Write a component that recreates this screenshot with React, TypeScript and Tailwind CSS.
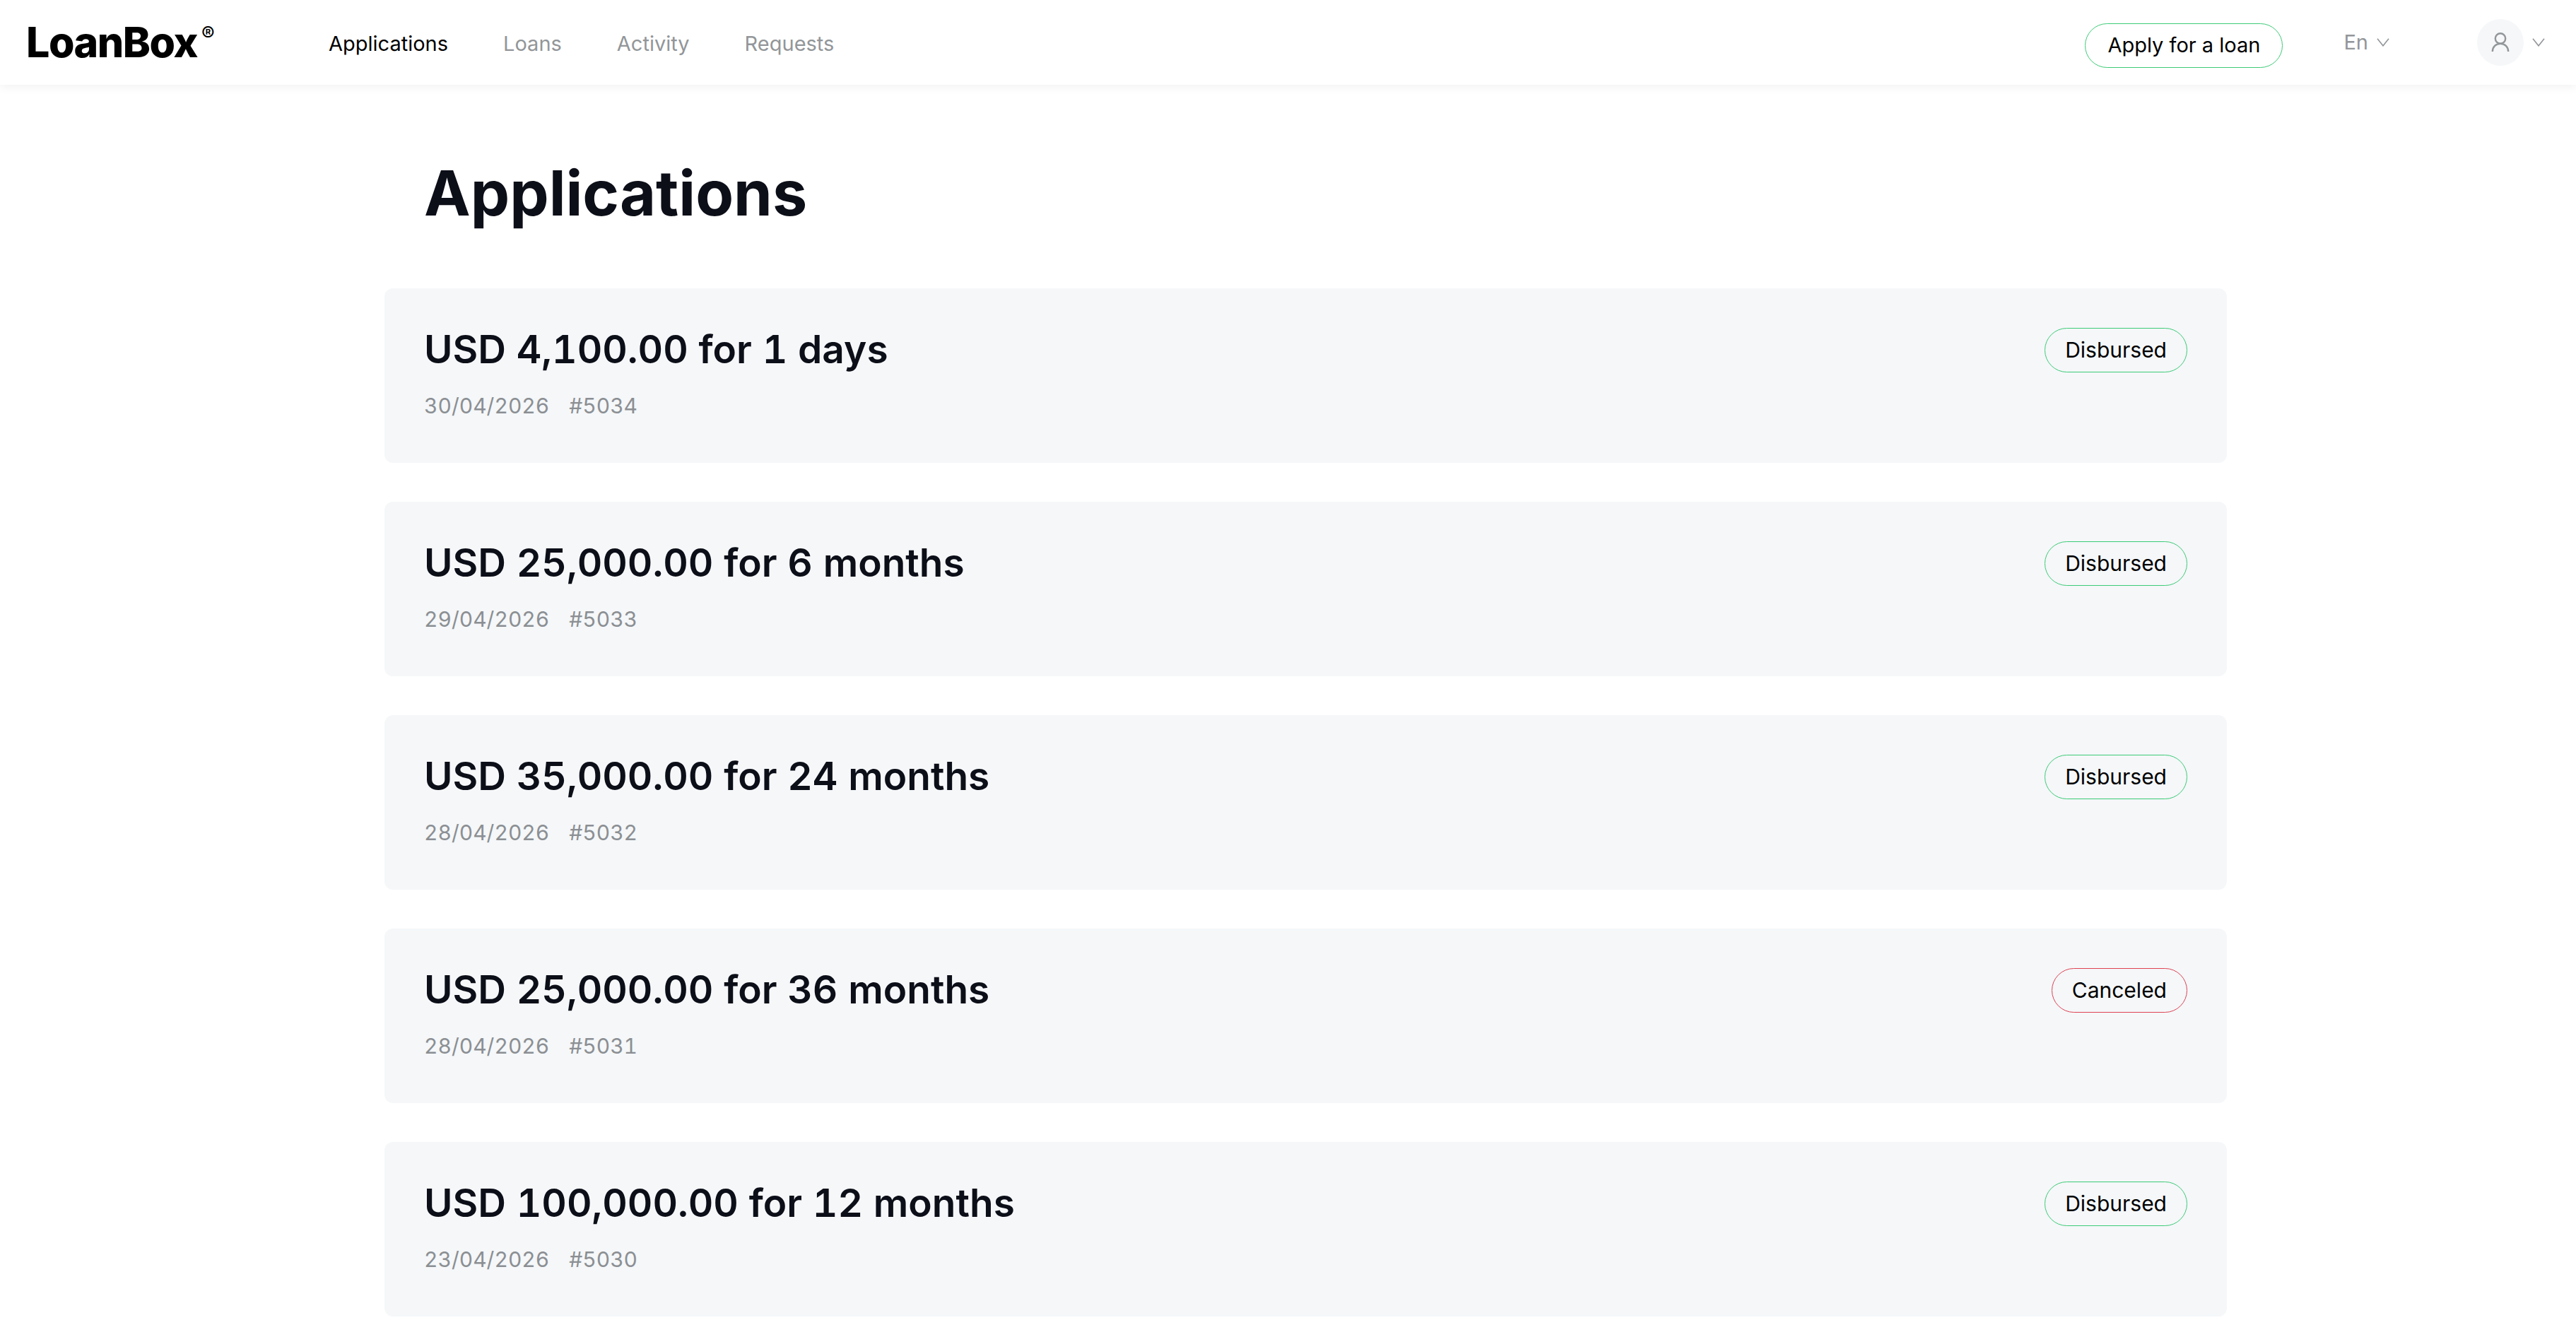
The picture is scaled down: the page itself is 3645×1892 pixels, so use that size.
const navItems = [
  { label: "Applications", active: true },
  { label: "Loans", active: false },
  { label: "Activity", active: false },
  { label: "Requests", active: false },
];

type Status = "Disbursed" | "Canceled";

const applications: { id: number; title: string; date: string; status: Status }[] = [
  { id: 5034, title: "USD 4,100.00 for 1 days", date: "30/04/2026", status: "Disbursed" },
  { id: 5033, title: "USD 25,000.00 for 6 months", date: "29/04/2026", status: "Disbursed" },
  { id: 5032, title: "USD 35,000.00 for 24 months", date: "28/04/2026", status: "Disbursed" },
  { id: 5031, title: "USD 25,000.00 for 36 months", date: "28/04/2026", status: "Canceled" },
  { id: 5030, title: "USD 100,000.00 for 12 months", date: "23/04/2026", status: "Disbursed" },
];

const statusBorder: Record<Status, string> = {
  Disbursed: "border-[#3ccb76]",
  Canceled: "border-[#de4252]",
};

function ChevronIcon() {
  return (
    <svg className="h-3 w-[18px]" viewBox="0 0 18 12" fill="none" stroke="currentColor" strokeWidth="1.6" aria-hidden="true">
      <path d="M1 .8l8 10 8-10" />
    </svg>
  );
}

function UserIcon() {
  return (
    <svg className="h-7 w-7" viewBox="0 0 28 28" fill="none" stroke="currentColor" strokeWidth="2.4" aria-hidden="true">
      <circle cx="14" cy="8.5" r="7.2" />
      <path d="M2.8 27c0-6.5 4.8-11.3 11.2-11.3S25.2 20.5 25.2 27" />
    </svg>
  );
}

function Header() {
  return (
    <header className="flex h-[120px] items-center bg-white pr-11 pl-[37px] shadow-[0_4px_12px_rgba(0,0,0,0.05)]">
      <a href="#" className="flex w-[428px] shrink-0 items-start text-black" aria-label="LoanBox">
        <span className="text-[59px] leading-[60px] font-extrabold tracking-tight">LoanBox</span>
        <span className="pl-1.5 text-[28px] leading-9 font-medium">®</span>
      </a>

      <nav className="flex flex-1 items-center gap-[78px] pt-1">
        {navItems.map((item) => (
          <a
            key={item.label}
            href="#"
            aria-current={item.active ? "page" : undefined}
            className={item.active ? "text-[29px] leading-10 text-black" : "text-[29px] leading-10 text-[#929699]"}
          >
            {item.label}
          </a>
        ))}
      </nav>

      <div className="flex shrink-0 items-center">
        <button type="button" className="mt-2 h-[63px] rounded-full border border-[#3ccb76] px-[31px] text-[29px] text-black">
          Apply for a loan
        </button>

        <button type="button" className="ml-[86px] flex items-center gap-3 text-[29px] text-[#929699]">
          En
          <ChevronIcon />
        </button>

        <button type="button" className="ml-[124px] flex items-center gap-3 text-[#929699]" aria-label="Account">
          <span className="grid h-[66px] w-[66px] place-items-center rounded-full bg-[#f5f7f9]">
            <UserIcon />
          </span>
          <ChevronIcon />
        </button>
      </div>
    </header>
  );
}

export default function App() {
  return (
    <div className="min-h-screen bg-white font-[Inter,sans-serif] text-[#0c0e18]">
      <Header />

      <main className="pt-[98px] pr-[494px] pb-7 pl-[544px]">
        <h1 className="pl-14 text-[88px] leading-[110px] font-bold">Applications</h1>

        <ul className="mt-20 flex flex-col gap-[55px]">
          {applications.map((item) => (
            <li key={item.id} className="flex h-[247px] items-start justify-between rounded-xl bg-[#f5f7f9] px-14 pt-14">
              <div className="tabular-nums">
                <h2 className="text-[55px] leading-[60px] font-semibold">{item.title}</h2>
                <p className="mt-[30px] flex gap-7 text-[30px] leading-10 text-[#8b8f93]">
                  <span>{item.date}</span>
                  <span>#{item.id}</span>
                </p>
              </div>

              <span
                className={`flex h-[63px] items-center rounded-full border px-7 text-[30px] text-black ${statusBorder[item.status]}`}
              >
                {item.status}
              </span>
            </li>
          ))}
        </ul>
      </main>
    </div>
  );
}
